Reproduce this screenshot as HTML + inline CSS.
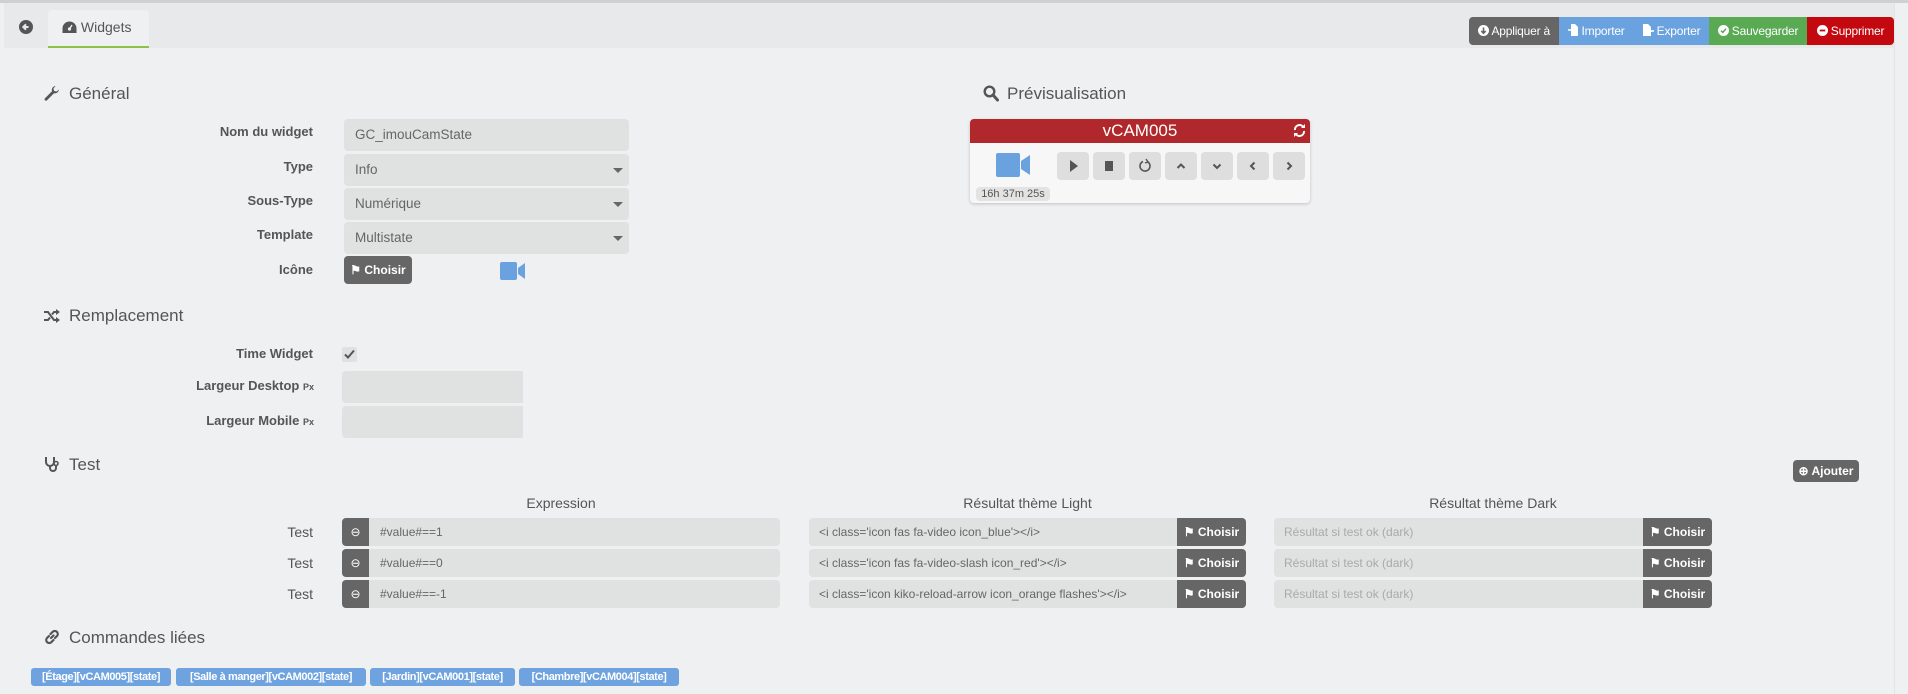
<!DOCTYPE html>
<html><head><meta charset="utf-8"><style>
*{box-sizing:border-box;margin:0;padding:0}
body{width:1908px;height:694px;background:#eff0f2;font-family:"Liberation Sans",Arial,sans-serif;color:#555;position:relative;overflow:hidden}
.a{position:absolute}
.topline{left:0;top:0;width:1908px;height:3px;background:#cfd0d2}
.bar{left:4px;top:3px;width:1890px;height:45px;background:#e8e9eb}
.scroll{left:1894px;top:3px;width:14px;height:691px;background:#eff0f2;border-left:1px solid #e4e4e4}
.tab{left:48px;top:10px;width:101px;height:38px;background:#eff0f2;border-radius:4px 4px 0 0;border-bottom:2px solid #8bc34a;font-size:14px;color:#555;padding:9px 0 0 14px}
.btn{top:17px;height:28px;color:#fff;font-size:12px;line-height:28px;text-align:center;white-space:nowrap;letter-spacing:-0.2px}
h3{position:absolute;font-weight:normal;font-size:17px;color:#555}
.lbl{position:absolute;right:1595px;font-size:13px;font-weight:bold;color:#555;text-align:right;white-space:nowrap}
.in{position:absolute;background:#e0e1e1;border-radius:4px;font-size:13.5px;color:#666;padding-left:11px;line-height:32px}
.caret{position:absolute;right:6px;top:14px;border-left:5px solid transparent;border-right:5px solid transparent;border-top:5px solid #666}
.dk{background:#666;color:#fff}
.tin{position:absolute;height:28px;background:#e0e1e1;border-radius:4px;font-size:12px;color:#666;line-height:28px;padding-left:10px;white-space:nowrap}
.ch{position:absolute;right:0;top:0;width:69px;height:28px;background:#666;color:#fff;font-size:12px;font-weight:bold;text-align:center;border-radius:0 4px 4px 0}
.pb{position:absolute;top:152px;width:32px;height:28px;background:#dedede;border-radius:4px}
.pb svg{position:absolute;left:8px;top:6px}
.tag{position:absolute;top:668px;height:18px;background:#6ea3e0;color:#fff;font-size:11px;font-weight:bold;line-height:18px;text-align:center;border-radius:3px;white-space:nowrap;overflow:hidden;letter-spacing:-0.4px}
.hdr{position:absolute;top:495px;font-size:14px;color:#555;text-align:center}
</style></head><body>
<div class="a topline"></div>
<div class="a bar"></div>
<div class="a scroll"></div>
<svg class="a" style="left:19px;top:20px" width="14" height="14" viewBox="0 0 14 14"><circle cx="7" cy="7" r="7" fill="#555"/><path d="M9.5 7H4.5M7 4.3L4.3 7 7 9.7" stroke="#e8e9eb" stroke-width="2" fill="none"/></svg>
<div class="a tab"><svg width="15" height="13" viewBox="0 0 15 13" style="vertical-align:-2px"><path d="M7.5 0.5A7 7 0 0 0 0.5 7.5V12H14.5V7.5A7 7 0 0 0 7.5 0.5Z" fill="#555"/><circle cx="7.5" cy="8" r="1.6" fill="#eff0f2"/><path d="M7.5 8L10 4" stroke="#eff0f2" stroke-width="1.4"/></svg> Widgets</div>
<div class="a btn" style="left:1469px;width:90px;background:#666;border-radius:4px 0 0 4px"><svg width="11" height="11" viewBox="0 0 11 11" style="vertical-align:-1px"><circle cx="5.5" cy="5.5" r="5.5" fill="#fff"/><path d="M5.5 2.5V8M3.3 6L5.5 8.2 7.7 6" stroke="#666" stroke-width="1.6" fill="none"/></svg> Appliquer à</div>
<div class="a btn" style="left:1559px;width:75px;background:#6aa2e0"><svg width="10" height="12" viewBox="0 0 10 12" style="vertical-align:-1px"><path d="M3 0H7L10 3V12H3Z" fill="#fff"/><path d="M0 6H6M4 4L6 6 4 8" stroke="#fff" stroke-width="1.4" fill="none"/></svg> Importer</div>
<div class="a btn" style="left:1634px;width:75px;background:#6aa2e0"><svg width="11" height="12" viewBox="0 0 11 12" style="vertical-align:-1px"><path d="M0 0H5L8 3V12H0Z" fill="#fff"/><path d="M6 7H11" stroke="#fff" stroke-width="1.6"/></svg> Exporter</div>
<div class="a btn" style="left:1709px;width:98px;background:#5aaa54"><svg width="11" height="11" viewBox="0 0 11 11" style="vertical-align:-1px"><circle cx="5.5" cy="5.5" r="5.5" fill="#fff"/><path d="M3 5.7L4.8 7.4 8 3.8" stroke="#5aaa54" stroke-width="1.5" fill="none"/></svg> Sauvegarder</div>
<div class="a btn" style="left:1807px;width:87px;background:#c3090f;border-radius:0 4px 4px 0"><svg width="11" height="11" viewBox="0 0 11 11" style="vertical-align:-1px"><circle cx="5.5" cy="5.5" r="5.5" fill="#fff"/><path d="M2.7 5.5H8.3" stroke="#c3090f" stroke-width="1.8"/></svg> Supprimer</div>

<svg class="a" style="left:44px;top:85px" width="16" height="16" viewBox="0 0 16 16"><path d="M15 4.5A4 4 0 0 1 10 8.2L3 15.2A1.2 1.2 0 0 1 1 13.2L8 6.2A4 4 0 0 1 11.7 1L9.5 3.3 10 6 12.7 6.5Z" fill="#555"/></svg>
<h3 style="left:69px;top:84px">Général</h3>
<div class="lbl" style="top:124px">Nom du widget</div>
<div class="in" style="left:344px;top:119px;width:285px;height:32px">GC_imouCamState</div>
<div class="lbl" style="top:159px">Type</div>
<div class="in" style="left:344px;top:154px;width:285px;height:32px">Info<div class="caret"></div></div>
<div class="lbl" style="top:193px">Sous-Type</div>
<div class="in" style="left:344px;top:188px;width:285px;height:32px">Numérique<div class="caret"></div></div>
<div class="lbl" style="top:227px">Template</div>
<div class="in" style="left:344px;top:222px;width:285px;height:32px">Multistate<div class="caret"></div></div>
<div class="lbl" style="top:262px">Icône</div>
<div class="a dk" style="left:344px;top:256px;width:68px;height:28px;border-radius:4px;font-size:12px;font-weight:bold;line-height:28px;text-align:center">⚑ Choisir</div>
<svg class="a" style="left:500px;top:262px" width="25" height="18" viewBox="0 0 25 18"><rect x="0" y="0" width="17" height="18" rx="2" fill="#6aa2e0"/><path d="M18 6L25 1V17L18 12Z" fill="#6aa2e0"/></svg>

<svg class="a" style="left:983px;top:85px" width="16" height="17" viewBox="0 0 16 17"><circle cx="6.5" cy="6.5" r="4.8" stroke="#555" stroke-width="2.4" fill="none"/><path d="M10 10L14.5 15" stroke="#555" stroke-width="3" stroke-linecap="round"/></svg>
<h3 style="left:1007px;top:84px">Prévisualisation</h3>
<div class="a" style="left:970px;top:119px;width:340px;height:84px;background:#f7f7f7;border-radius:4px;box-shadow:0 1px 3px rgba(0,0,0,.2)"></div>
<div class="a" style="left:970px;top:119px;width:340px;height:24px;background:#b0282b;border-radius:4px 4px 0 0;color:#fff;font-size:17px;text-align:center;line-height:24px">vCAM005</div>
<svg class="a" style="left:1293px;top:124px" width="13" height="13" viewBox="0 0 13 13"><path d="M2 6A4.5 4.5 0 0 1 10.5 3.5M11 7A4.5 4.5 0 0 1 2.5 9.5" stroke="#fff" stroke-width="2" fill="none"/><path d="M8 4H12V0ZM5 9H1V13Z" fill="#fff"/></svg>
<svg class="a" style="left:996px;top:153px" width="34" height="24" viewBox="0 0 34 24"><rect x="0" y="0" width="24" height="24" rx="2" fill="#6aa2e0"/><path d="M25 8L34 2V22L25 16Z" fill="#6aa2e0"/></svg>
<div class="pb" style="left:1057px"><svg width="16" height="16" viewBox="0 0 16 16"><path d="M5 2L13 8 5 14Z" fill="#555"/></svg></div>
<div class="pb" style="left:1093px"><svg width="16" height="16" viewBox="0 0 16 16"><rect x="4" y="3" width="8" height="10" fill="#555"/></svg></div>
<div class="pb" style="left:1129px"><svg width="16" height="16" viewBox="0 0 16 16"><path d="M6 3.5A5 5 0 1 0 10 3.5" stroke="#555" stroke-width="1.6" fill="none"/><path d="M9 1L11 4 8 5" stroke="#555" stroke-width="1.4" fill="none"/></svg></div>
<div class="pb" style="left:1165px"><svg width="16" height="16" viewBox="0 0 16 16"><path d="M4.5 10L8 6.5 11.5 10" stroke="#555" stroke-width="2" fill="none"/></svg></div>
<div class="pb" style="left:1201px"><svg width="16" height="16" viewBox="0 0 16 16"><path d="M4.5 6.5L8 10 11.5 6.5" stroke="#555" stroke-width="2" fill="none"/></svg></div>
<div class="pb" style="left:1237px"><svg width="16" height="16" viewBox="0 0 16 16"><path d="M9.5 4.5L6 8 9.5 11.5" stroke="#555" stroke-width="2" fill="none"/></svg></div>
<div class="pb" style="left:1273px"><svg width="16" height="16" viewBox="0 0 16 16"><path d="M6.5 4.5L10 8 6.5 11.5" stroke="#555" stroke-width="2" fill="none"/></svg></div>
<div class="a" style="left:976px;top:187px;width:74px;height:14px;background:#e3e3e3;border-radius:4px;font-size:11px;line-height:14px;text-align:center;color:#555">16h 37m 25s</div>

<svg class="a" style="left:44px;top:309px" width="16" height="14" viewBox="0 0 16 14"><path d="M0 3H4L10 11H13M0 11H4L6 8.5M8 5.5L10 3H13" stroke="#555" stroke-width="2" fill="none"/><path d="M12 0L16 3 12 6ZM12 8L16 11 12 14Z" fill="#555"/></svg>
<h3 style="left:69px;top:306px">Remplacement</h3>
<div class="lbl" style="top:346px">Time Widget</div>
<div class="a" style="left:342px;top:347px;width:15px;height:15px;background:#e0e1e1;border-radius:2px"><svg width="15" height="15" viewBox="0 0 15 15"><path d="M3 7.5L6 10.5 12 3.5" stroke="#555" stroke-width="2" fill="none"/></svg></div>
<div class="lbl" style="top:378px;right:1594px">Largeur Desktop <span style="font-size:9px">Px</span></div>
<div class="in" style="left:342px;top:371px;width:181px;height:32px;border-radius:4px 0 0 4px"></div>
<div class="lbl" style="top:413px;right:1594px">Largeur Mobile <span style="font-size:9px">Px</span></div>
<div class="in" style="left:342px;top:406px;width:181px;height:32px;border-radius:4px 0 0 4px"></div>

<svg class="a" style="left:44px;top:456px" width="16" height="18" viewBox="0 0 16 18"><path d="M2 1V6A4 4 0 0 0 10 6V1M6 10V12A3 3 0 0 0 12 12V9" stroke="#555" stroke-width="2" fill="none"/><circle cx="12" cy="7.5" r="2" stroke="#555" stroke-width="1.6" fill="none"/></svg>
<h3 style="left:69px;top:455px">Test</h3>
<div class="a dk" style="left:1793px;top:460px;width:66px;height:22px;border-radius:4px;font-size:12px;font-weight:bold;line-height:22px;text-align:center">⊕ Ajouter</div>
<div class="hdr" style="left:342px;width:438px">Expression</div>
<div class="hdr" style="left:809px;width:437px">Résultat thème Light</div>
<div class="hdr" style="left:1274px;width:438px">Résultat thème Dark</div>

<div class="lbl" style="top:524px;font-weight:normal;font-size:14px">Test</div>
<div class="tin" style="left:342px;top:518px;width:438px;padding-left:38px">#value#==1<div class="a dk" style="left:0;top:0;width:27px;height:28px;border-radius:4px 0 0 4px;text-align:center">⊖</div></div>
<div class="tin" style="left:809px;top:518px;width:437px">&lt;i class='icon fas fa-video icon_blue'&gt;&lt;/i&gt;<div class="ch">⚑ Choisir</div></div>
<div class="tin" style="left:1274px;top:518px;width:438px;color:#aaa">Résultat si test ok (dark)<div class="ch">⚑ Choisir</div></div>

<div class="lbl" style="top:555px;font-weight:normal;font-size:14px">Test</div>
<div class="tin" style="left:342px;top:549px;width:438px;padding-left:38px">#value#==0<div class="a dk" style="left:0;top:0;width:27px;height:28px;border-radius:4px 0 0 4px;text-align:center">⊖</div></div>
<div class="tin" style="left:809px;top:549px;width:437px">&lt;i class='icon fas fa-video-slash icon_red'&gt;&lt;/i&gt;<div class="ch">⚑ Choisir</div></div>
<div class="tin" style="left:1274px;top:549px;width:438px;color:#aaa">Résultat si test ok (dark)<div class="ch">⚑ Choisir</div></div>

<div class="lbl" style="top:586px;font-weight:normal;font-size:14px">Test</div>
<div class="tin" style="left:342px;top:580px;width:438px;padding-left:38px">#value#==-1<div class="a dk" style="left:0;top:0;width:27px;height:28px;border-radius:4px 0 0 4px;text-align:center">⊖</div></div>
<div class="tin" style="left:809px;top:580px;width:437px">&lt;i class='icon kiko-reload-arrow icon_orange flashes'&gt;&lt;/i&gt;<div class="ch">⚑ Choisir</div></div>
<div class="tin" style="left:1274px;top:580px;width:438px;color:#aaa">Résultat si test ok (dark)<div class="ch">⚑ Choisir</div></div>

<svg class="a" style="left:44px;top:629px" width="16" height="16" viewBox="0 0 16 16"><path d="M7 9L9.5 6.5M6.5 5L8.5 3A2.5 2.5 0 0 1 13 7L11 9M9.5 11L7.5 13A2.5 2.5 0 0 1 3 9L5 7" stroke="#555" stroke-width="2.2" fill="none" stroke-linecap="round"/></svg>
<h3 style="left:69px;top:628px">Commandes liées</h3>
<div class="tag" style="left:31px;width:140px">[Étage][vCAM005][state]</div>
<div class="tag" style="left:176px;width:190px">[Salle à manger][vCAM002][state]</div>
<div class="tag" style="left:370px;width:145px">[Jardin][vCAM001][state]</div>
<div class="tag" style="left:519px;width:160px">[Chambre][vCAM004][state]</div>
</body></html>
